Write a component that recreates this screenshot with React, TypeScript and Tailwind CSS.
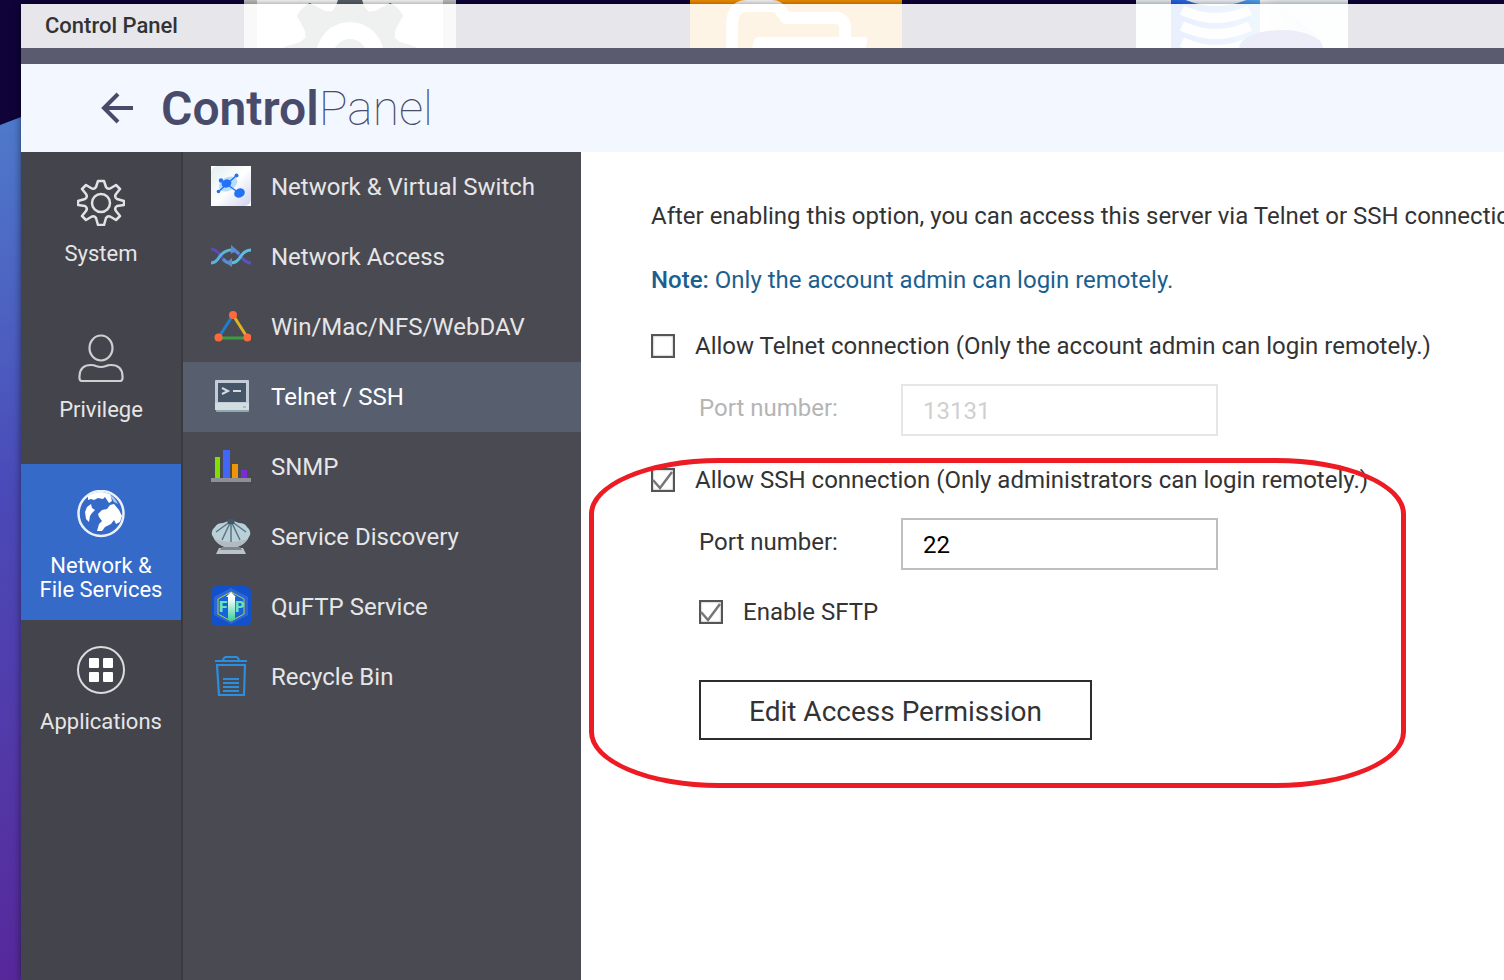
import { useState } from "react";
import type { ReactNode } from "react";

const SettingsTile = () => (
  <svg className="size-[212px] shrink-0" viewBox="0 0 212 212" aria-hidden="true">
    <rect width="212" height="212" rx="6" fill="#c4c4c4" />
    <rect x="13" width="186" height="212" fill="#fff" />
    <g fill="#5d646c" transform="translate(106 116)">
      {[0, 45, 90, 135].map((angle) => (
        <path
          key={angle}
          transform={`rotate(${angle})`}
          d="M-9 -66Q0 -69 9 -66L14 -50L22 -40V40L14 50L9 66Q0 69 -9 66L-14 50L-22 40V-40L-14 -50Z"
        />
      ))}
      <circle r="47" />
      <circle r="34" fill="#fff" />
      <circle r="17" />
    </g>
  </svg>
);

const FolderTile = () => (
  <svg className="size-[212px] shrink-0" viewBox="0 0 212 212" aria-hidden="true">
    <rect width="212" height="212" rx="6" fill="#fa9300" />
    <path
      d="M42 160V86Q42 66 56 66H82Q88 66 91 71L96 78H145Q155 78 155 88V102"
      fill="none"
      stroke="#fff"
      strokeWidth="12"
      strokeLinejoin="round"
    />
    <path d="M70 97H174Q178 97 177 102L162 164H48L64 101Q65 97 70 97Z" fill="#fff" />
  </svg>
);

const StorageTile = () => (
  <svg className="size-[212px] shrink-0" viewBox="0 0 212 212" aria-hidden="true">
    <defs>
      <linearGradient id="storageShade" x1="0" y1="0" x2="1" y2="0">
        <stop offset="0" stopColor="#ffffff" />
        <stop offset="1" stopColor="#ccd2ee" />
      </linearGradient>
      <linearGradient id="storageDisk" x1="0" y1="0" x2="1" y2="0">
        <stop offset="0" stopColor="#2563f0" />
        <stop offset="1" stopColor="#55aaf6" />
      </linearGradient>
    </defs>
    <rect width="212" height="212" rx="6" fill="#eef3f5" />
    <path d="M124 56H132L186 100V120H124Z" fill="url(#storageShade)" />
    <rect x="35" y="20" width="89" height="150" fill="url(#storageDisk)" />
    <g fill="none" stroke="#f4f8ff" strokeWidth="10">
      <path d="M46 53Q80 69 114 53" />
      <path d="M46 70Q80 86 114 70" />
      <path d="M46 86Q80 102 114 86" />
      <path d="M46 102Q80 118 114 102" />
    </g>
    <ellipse cx="145" cy="108" rx="42" ry="18" fill="#3c4cc0" />
  </svg>
);

const GearIcon = () => (
  <svg className="size-12" viewBox="0 0 48 48" fill="none" stroke="#e2e2e4" strokeWidth="2.500" strokeLinejoin="round" aria-hidden="true">
    <path d="M21 3H27L29 9Q31 12 34 10L39 7L43 11L39 16Q37 19 40 21L47 23V27L40 28Q37 30 39 33L43 38L39 42L34 39Q31 37 29 40L27 47H21L19 40Q17 37 14 39L9 42L5 38L9 33Q11 30 8 28L1 27V23L8 21Q11 19 9 16L5 11L9 7L14 10Q17 12 19 9Z" />
    <circle cx="24" cy="25" r="9" />
  </svg>
);

const PersonIcon = () => (
  <svg className="size-12" viewBox="0 0 48 48" fill="none" stroke="#cfcfd2" strokeWidth="2.200" aria-hidden="true">
    <ellipse cx="24" cy="14" rx="11.500" ry="12.500" />
    <path d="M5 47H43Q46 47 45.500 42Q45 31 34 31Q31 31 29 32Q24 34 19 32Q17 31 14 31Q3 31 2.500 42Q2 47 5 47Z" />
  </svg>
);

const GlobeIcon = () => (
  <svg className="size-12" viewBox="0 0 48 48" aria-hidden="true">
    <circle cx="24" cy="23.500" r="22.500" fill="none" stroke="#eaf1fb" strokeWidth="2.500" />
    <g fill="#fff">
      <path d="M11 6Q17 2 25 2L33 4L35 11L32 13L28 7L26 9L21 8L17 10L14 9L11 10Z" />
      <path d="M10 17L14 14L15 18L18 20L15 23L13 26L12 32L9 29L8 22Z" />
      <path d="M21 24L25 20L30 19L33 15L37 14L42 20L45 26L43 32L39 34L37 30L34 34L28 37L25 41H20L22 34L25 31L22 27Z" />
      <path d="M32 4Q38 7 41 14L37 12Z" opacity="0.600" />
    </g>
  </svg>
);

const AppsIcon = () => (
  <svg className="size-12" viewBox="0 0 48 48" aria-hidden="true">
    <circle cx="24" cy="24" r="23" fill="none" stroke="#dcdcde" strokeWidth="2" />
    <g fill="#fff">
      <rect x="12" y="12" width="10" height="10" rx="1" />
      <rect x="26" y="12" width="10" height="10" rx="1" />
      <rect x="12" y="26" width="10" height="10" rx="1" />
      <rect x="26" y="26" width="10" height="10" rx="1" />
    </g>
  </svg>
);

const SwitchIcon = () => (
  <svg className="size-10" viewBox="0 0 40 40" aria-hidden="true">
    <defs>
      <linearGradient id="switchBg" x1="0" y1="0" x2="1" y2="1">
        <stop offset="0" stopColor="#e2eef0" />
        <stop offset="0.500" stopColor="#fff" />
        <stop offset="1" stopColor="#cfd2ec" />
      </linearGradient>
    </defs>
    <rect width="40" height="40" fill="#fff" />
    <rect width="40" height="40" rx="7" fill="url(#switchBg)" />
    <ellipse cx="17" cy="18" rx="10" ry="6.500" fill="#b9dcf8" transform="rotate(-30 17 18)" />
    <g stroke="#2272f5" strokeWidth="1.500">
      <path d="M7 26L26 9M10 14L28 27" />
    </g>
    <g fill="#2272f5">
      <ellipse cx="15.500" cy="17.500" rx="5" ry="4" transform="rotate(-20 15.500 17.500)" />
      <ellipse cx="28.500" cy="27" rx="5.500" ry="4.500" transform="rotate(-25 28.500 27)" />
      <circle cx="25.500" cy="9.500" r="2" />
      <circle cx="10" cy="14.500" r="2.200" />
      <circle cx="7.500" cy="25.500" r="1.800" />
    </g>
  </svg>
);

const AccessIcon = () => (
  <svg className="size-10" viewBox="0 0 40 40" fill="none" strokeWidth="3" aria-hidden="true">
    <path d="M0 13Q5 13 10 20Q15 27 20 27" stroke="#5b4bb8" />
    <path d="M20 14Q25 14 30 21Q35 27 40 27" stroke="#5b52bc" />
    <path d="M0 27Q5 27 9 20Q14 14 20 14" stroke="#58b4d8" />
    <path d="M20 27Q26 27 30 20Q34 14 40 14" stroke="#5bbfdc" />
    <path d="M20 14Q25 14 28 18M12 23Q15 27 20 27" stroke="#5a8ed0" />
    <path d="M20 9L26 14L20 18ZM21 22L15 27L21 31Z" fill="#5a8ed0" />
  </svg>
);

const TriangleIcon = () => (
  <svg className="size-10" viewBox="0 0 40 40" strokeWidth="3" aria-hidden="true">
    <path d="M22 9L8 31" stroke="#1e7fd0" />
    <path d="M22 9L36 31" stroke="#e3b020" />
    <path d="M8 32H36" stroke="#3f9a44" />
    <g fill="#ff6a3c">
      <circle cx="22" cy="9" r="4" />
      <circle cx="7.500" cy="31.500" r="4" />
      <circle cx="36.500" cy="31.500" r="4" />
    </g>
  </svg>
);

const TerminalIcon = () => (
  <svg className="size-10" viewBox="0 0 40 40" aria-hidden="true">
    <rect x="5" y="33" width="33" height="3" rx="1" fill="#8fa9b3" />
    <rect x="4" y="4" width="34" height="30" rx="1" fill="#c3ccd6" />
    <rect x="4" y="27" width="34" height="7" fill="#d3dde0" />
    <rect x="7" y="7" width="28" height="19" fill="#465468" />
    <path d="M11 12L17 15L11 18M22 15H30" stroke="#d4dae0" strokeWidth="2" fill="none" />
    <rect x="32" y="30" width="3" height="2" fill="#9fc0c8" />
  </svg>
);

const BarsIcon = () => (
  <svg className="size-10" viewBox="0 0 40 40" aria-hidden="true">
    <rect x="4" y="11" width="5" height="21" fill="#7fe000" />
    <rect x="12" y="4" width="7" height="28" fill="#4466f5" />
    <rect x="21" y="18" width="6" height="14" fill="#ee9608" />
    <rect x="30" y="24" width="6" height="8" fill="#7a2cd8" />
    <rect y="32" width="40" height="4" fill="#8f9096" />
  </svg>
);

const ShellIcon = () => (
  <svg className="size-10" viewBox="0 0 40 40" aria-hidden="true">
    <path d="M8 32H32L35 38H5Z" fill="#bcc3c8" />
    <path d="M11 31H29L31 34H9Z" fill="#7b868e" />
    <path d="M1 19Q0 14 4 11Q6 7 12 7L20 4L28 7Q34 7 36 11Q40 14 39 19Q35 28 26 31H14Q5 28 1 19Z" fill="#b9d0d8" />
    <path d="M3 23Q11 26 20 26T37 23Q33 29 26 31H14Q7 29 3 23Z" fill="#b3bac0" />
    <path d="M20 5L5 16M20 5L11 24M20 5V26M20 5L29 24M20 5L35 16" stroke="#5b7683" strokeWidth="1.500" />
    <path d="M16 4Q20 2 24 4L23 8H17Z" fill="#3f5b68" />
  </svg>
);

const FtpIcon = () => (
  <svg className="size-10" viewBox="0 0 40 40" aria-hidden="true">
    <defs>
      <linearGradient id="ftpArrow" x1="0" y1="0" x2="0" y2="1">
        <stop offset="0.200" stopColor="#fff" />
        <stop offset="1" stopColor="#35cf9c" />
      </linearGradient>
    </defs>
    <rect width="40" height="40" rx="6" fill="#1351cc" />
    <path d="M20 2L37 11V29L20 38L3 29V11Z" fill="#2d67d4" />
    <path d="M20 6L33 13V28L20 35L7 28V13Z" fill="#1466d8" stroke="#b9c84a" />
    <g fill="#6be3c1" fontFamily="Roboto, sans-serif" fontWeight="900" fontSize="15">
      <text x="8" y="26">F</text>
      <text x="24" y="26">P</text>
    </g>
    <path d="M20 6L25 11H24V33L20 35L17 33V11H15Z" fill="url(#ftpArrow)" />
  </svg>
);

const BinIcon = () => (
  <svg className="size-10" viewBox="0 0 40 40" fill="none" stroke="#2b8fdf" strokeWidth="2.200" aria-hidden="true">
    <path d="M4 5H36M12 4Q13 1 15 1H25Q27 1 28 4" />
    <path d="M6 9H34L33 39H8Z" />
    <path d="M12 23H28M12 27H28M12 31H28M12 35H28" />
  </svg>
);

type MenuItem = {
  name: string;
  icon: ReactNode;
};

const categories: MenuItem[] = [
  { name: "System", icon: <GearIcon /> },
  { name: "Privilege", icon: <PersonIcon /> },
  { name: "Network & File Services", icon: <GlobeIcon /> },
  { name: "Applications", icon: <AppsIcon /> },
];

const services: MenuItem[] = [
  { name: "Network & Virtual Switch", icon: <SwitchIcon /> },
  { name: "Network Access", icon: <AccessIcon /> },
  { name: "Win/Mac/NFS/WebDAV", icon: <TriangleIcon /> },
  { name: "Telnet / SSH", icon: <TerminalIcon /> },
  { name: "SNMP", icon: <BarsIcon /> },
  { name: "Service Discovery", icon: <ShellIcon /> },
  { name: "QuFTP Service", icon: <FtpIcon /> },
  { name: "Recycle Bin", icon: <BinIcon /> },
];

type CheckboxProps = {
  label: string;
  checked: boolean;
  onChange: (checked: boolean) => void;
};

const Checkbox = ({ label, checked, onChange }: CheckboxProps) => (
  <label className="flex w-fit items-center gap-5 whitespace-nowrap leading-8">
    <span className="grid">
      <input
        type="checkbox"
        checked={checked}
        onChange={(e) => onChange(e.target.checked)}
        className="peer col-start-1 row-start-1 size-6 appearance-none border-2 border-[#555555] bg-white shadow-[inset_0_0_2px_#888888]"
      />
      <svg
        className="pointer-events-none invisible col-start-1 row-start-1 size-6 peer-checked:visible"
        viewBox="0 0 24 24"
        fill="none"
        stroke="#777777"
        strokeWidth="2.500"
        aria-hidden="true"
      >
        <path d="M2 12L9 20L21 4" />
      </svg>
    </span>
    {label}
  </label>
);

type PortFieldProps = {
  id: string;
  value: string;
  disabled: boolean;
  onChange: (value: string) => void;
};

const PortField = ({ id, value, disabled, onChange }: PortFieldProps) => (
  <div className="mt-[22px] flex pl-12">
    <label htmlFor={id} className={`w-[202px] shrink-0 leading-12 ${disabled ? "text-[#b5b5b5]" : ""}`}>
      Port number:
    </label>
    <input
      id={id}
      type="text"
      value={value}
      disabled={disabled}
      onChange={(e) => onChange(e.target.value)}
      className="h-[52px] w-[317px] border-2 border-[#bfbfbf] bg-white px-5 pt-0.5 text-black disabled:border-[#e6e6e6] disabled:text-[#d0d0d0]"
    />
  </div>
);

const App = () => {
  const [category, setCategory] = useState("Network & File Services");
  const [service, setService] = useState("Telnet / SSH");
  const [telnet, setTelnet] = useState(false);
  const [ssh, setSsh] = useState(true);
  const [sftp, setSftp] = useState(true);
  const [telnetPort, setTelnetPort] = useState("13131");
  const [sshPort, setSshPort] = useState("22");

  return (
    <div className="relative isolate flex min-h-screen overflow-hidden bg-[#0f0339] pt-1 pl-[21px] font-[Roboto,sans-serif] text-2xl text-[#333333]">
      {/* Desktop wallpaper and shortcuts behind the window */}
      <div className="absolute inset-y-0 left-0 -z-10 w-[21px] bg-linear-to-b from-[#4f88d0] via-[#4a4ab8] to-[#56289a] [clip-path:polygon(0_125px,100%_117px,100%_100%,0_100%)]" />
      <div className="absolute -top-[60px] left-[244px] -z-10 flex gap-[234px]">
        <SettingsTile />
        <FolderTile />
        <StorageTile />
      </div>

      <div className="flex min-w-0 flex-1 flex-col shadow-[0_0_8px_rgba(0,0,0,0.5)]">
        <div className="h-11 bg-white/90 px-6 text-[22px] leading-11 font-medium">Control Panel</div>
        <div className="h-4 bg-[#5a5b6f]" />

        <header className="flex h-[88px] items-center gap-[26px] bg-[#f3f7ff] pl-[78px] text-[#494b6b]">
          <button type="button" aria-label="Back">
            <svg className="size-9" viewBox="0 0 36 36" fill="none" stroke="currentColor" strokeWidth="4" aria-hidden="true">
              <path d="M34 18H5M19 4L5 18L19 32" />
            </svg>
          </button>
          <h1 className="pt-0.5 text-5xl font-thin">
            <span className="font-semibold">Control</span>Panel
          </h1>
        </header>

        <div className="flex flex-1">
          <nav className="w-[162px] shrink-0 border-r-2 border-[#3a3a3d] bg-[#44444c]">
            {categories.map(({ name, icon }) => (
              <button
                key={name}
                type="button"
                onClick={() => setCategory(name)}
                className={`flex h-[156px] w-full flex-col items-center gap-4 px-4 pt-[26px] text-[22px] leading-6 ${
                  name === category ? "bg-[#356ac8] text-white" : "text-[#e6e6e6]"
                }`}
              >
                {icon}
                {name}
              </button>
            ))}
          </nav>

          <nav className="w-[398px] shrink-0 bg-[#4a4a53]">
            {services.map(({ name, icon }) => (
              <button
                key={name}
                type="button"
                onClick={() => setService(name)}
                className={`flex h-[70px] w-full items-center gap-5 px-7 ${
                  name === service ? "bg-[#575e6e] text-white" : "text-[#e6e6e6]"
                }`}
              >
                <span className="mb-0.5">{icon}</span>
                {name}
              </button>
            ))}
          </nav>

          <main className="relative min-w-0 flex-1 overflow-hidden bg-white pt-12 pl-[70px] leading-8">
            <p className="whitespace-nowrap">
              After enabling this option, you can access this server via Telnet or SSH connection.
            </p>
            <p className="mt-8 mb-[34px] text-[#1c5f8f]">
              <span className="font-medium">Note:</span> Only the account admin can login remotely.
            </p>

            <Checkbox
              label="Allow Telnet connection (Only the account admin can login remotely.)"
              checked={telnet}
              onChange={setTelnet}
            />
            <PortField id="telnet-port" value={telnetPort} disabled={!telnet} onChange={setTelnetPort} />

            <div className="mt-7">
              <Checkbox
                label="Allow SSH connection (Only administrators can login remotely.)"
                checked={ssh}
                onChange={setSsh}
              />
            </div>
            <PortField id="ssh-port" value={sshPort} disabled={!ssh} onChange={setSshPort} />

            <div className="mt-[26px] pl-12">
              <Checkbox label="Enable SFTP" checked={sftp} onChange={setSftp} />
              <button type="button" className="mt-[52px] h-[60px] border-2 border-[#2d2d2d] px-12 pt-1 text-[28px]">
                Edit Access Permission
              </button>
            </div>

            {/* Red outline drawn over the SSH settings */}
            <div className="pointer-events-none absolute top-[306px] left-2 h-[330px] w-[817px] rounded-[130px/56px] border-5 border-[#ed1c24]" />
          </main>
        </div>
      </div>
    </div>
  );
};

export default App;
